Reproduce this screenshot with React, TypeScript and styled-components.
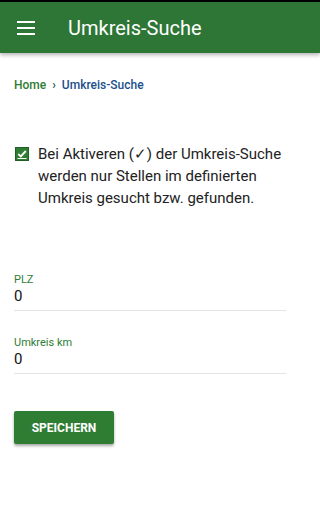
import React from "react";
import styled, { createGlobalStyle } from "styled-components";

const Global = createGlobalStyle`
  html, body { margin: 0; padding: 0; background: #fff; }
  body { font-family: Roboto, "Noto Sans", Arial, sans-serif; }
  * { box-sizing: border-box; }
`;

const Page = styled.div`
  width: 100%;
  min-height: 512px;
  background: #fff;
  border-top: 2px solid #000;
`;

const AppBar = styled.header`
  height: 51px;
  background: #2e7636;
  display: flex;
  align-items: center;
  padding-left: 17px;
  box-shadow: 0 2px 4px rgba(0, 0, 0, 0.3);
  position: relative;
`;

const MenuButton = styled.div`
  width: 18px;
  height: 14px;
  display: flex;
  flex-direction: column;
  justify-content: space-between;
  margin-right: 33px;
`;

const MenuLine = styled.span`
  display: block;
  height: 2px;
  background: #fff;
`;

const Title = styled.h1`
  margin: 0;
  color: #fff;
  font-size: 20px;
  font-weight: 400;
`;

const Content = styled.main`
  padding: 0 14px;
`;

const Breadcrumb = styled.nav`
  display: flex;
  align-items: center;
  gap: 6px;
  margin-top: 23px;
  font-size: 12px;
  font-weight: 500;
  height: 17px;
`;

const Crumb = styled.span<{ $current?: boolean }>`
  color: ${(p) => (p.$current ? "#1c4f8c" : "#2e7d32")};
`;

const Sep = styled.span`
  color: #2e5f55;
  font-size: 12px;
  font-weight: 700;
`;

const CheckRow = styled.label`
  display: flex;
  align-items: flex-start;
  gap: 9px;
  margin-top: 50px;
  padding-left: 1px;
  font-size: 15px;
  line-height: 22px;
  color: #222;
`;

const Box = styled.span`
  flex: none;
  width: 14px;
  height: 14px;
  margin-top: 4px;
  background: #2e7d32;
  border: 1px solid #1f5e24;
  display: flex;
  align-items: center;
  justify-content: center;
`;

const Field = styled.div<{ $top: number }>`
  margin-top: ${(p) => p.$top}px;
  border-bottom: 1px solid #e3e3e3;
  width: 272px;
`;

const Label = styled.div`
  font-size: 11px;
  color: #2e7d32;
  line-height: 13px;
`;

const Value = styled.div`
  font-size: 15px;
  color: #111;
  line-height: 20px;
  padding: 0 0 4px;
`;

const SaveButton = styled.button`
  margin-top: 37px;
  width: 100px;
  height: 33px;
  background: #2e7d32;
  color: #fff;
  border: none;
  border-radius: 2px;
  font-family: Roboto, Arial, sans-serif;
  font-size: 12px;
  font-weight: 700;
  box-shadow: 0 2px 3px rgba(0, 0, 0, 0.35);
`;

export default function App() {
  return (
    <Page>
      <Global />
      <AppBar>
        <MenuButton>
          <MenuLine />
          <MenuLine />
          <MenuLine />
        </MenuButton>
        <Title>Umkreis-Suche</Title>
      </AppBar>
      <Content>
        <Breadcrumb>
          <Crumb>Home</Crumb>
          <Sep>›</Sep>
          <Crumb $current>Umkreis-Suche</Crumb>
        </Breadcrumb>
        <CheckRow>
          <Box>
            <svg width="12" height="12" viewBox="0 0 12 12">
              <path d="M2.2 6 L4.8 8.4 L9.8 3" fill="none" stroke="#fff" strokeWidth="1.9" />
              <path d="M1.5 10.5 H10.5" stroke="#fff" strokeWidth="1" />
            </svg>
          </Box>
          <span>
            Bei Aktiveren (✓) der Umkreis-Suche werden nur Stellen im definierten Umkreis gesucht bzw. gefunden.
          </span>
        </CheckRow>
        <Field $top={64}>
          <Label>PLZ</Label>
          <Value>0</Value>
        </Field>
        <Field $top={25}>
          <Label>Umkreis km</Label>
          <Value>0</Value>
        </Field>
        <SaveButton>SPEICHERN</SaveButton>
      </Content>
    </Page>
  );
}
